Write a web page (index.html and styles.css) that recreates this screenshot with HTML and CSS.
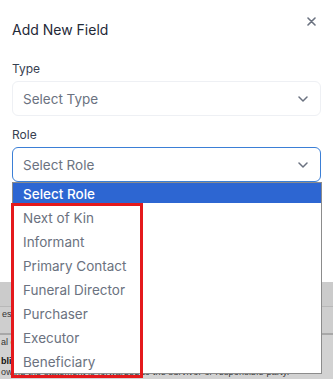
FILE: index.html
```html
<!DOCTYPE html>
<html>
<head>
    <title>Add New Field</title>
    <link rel="stylesheet" href="styles.css">
</head>
<body>

<div class="modal">
    <div class="modal-header">
        <h2 class="modal-title">Add New Field</h2>
        <span class="close">
            <svg width="9" height="9" viewBox="0 0 9 9"><path d="M1 1L8 8M8 1L1 8" stroke="#6b7280" stroke-width="1.6" stroke-linecap="round"/></svg>
        </span>
    </div>

    <div class="form-group">
        <label>Type</label>
        <div class="select">
            <span>Select Type</span>
            <svg class="chevron" width="10" height="6" viewBox="0 0 10 6"><path d="M1 1L5 5L9 1" fill="none" stroke="#6b7280" stroke-width="1.5" stroke-linecap="round" stroke-linejoin="round"/></svg>
        </div>
    </div>

    <div class="form-group">
        <label>Role</label>
        <div class="select active">
            <span>Select Role</span>
            <svg class="chevron" width="10" height="6" viewBox="0 0 10 6"><path d="M1 1L5 5L9 1" fill="none" stroke="#6b7280" stroke-width="1.5" stroke-linecap="round" stroke-linejoin="round"/></svg>
        </div>
    </div>
</div>

<!-- страница под модальным окном -->
<div class="page-behind">
    <div class="row row-head"></div>
    <div class="row row-mid"><span>est</span></div>
    <div class="row-text">
        <p>al e</p>
        <p class="bold">blic</p>
        <p class="last">owing the statement is forwarded to the survivor or responsible party.</p>
    </div>
</div>

<!-- открытый список -->
<ul class="dropdown">
    <li class="selected">Select Role</li>
    <li>Next of Kin</li>
    <li>Informant</li>
    <li>Primary Contact</li>
    <li>Funeral Director</li>
    <li>Purchaser</li>
    <li>Executor</li>
    <li>Beneficiary</li>
</ul>

<div class="highlight-box"></div>

</body>
</html>
```

FILE: styles.css
```css
body {
    font-family: Inter, "Noto Sans", sans-serif;
    margin: 0;
    padding: 0;
    width: 333px;
    height: 379px;
    overflow: hidden;
    background-color: #d2d2d2;
    position: relative;
}

.modal {
    background-color: #fff;
    height: 282px;
    box-sizing: border-box;
    padding: 12px 12px 0 12px;
}

.modal-header {
    display: flex;
    justify-content: space-between;
    align-items: flex-start;
}

.modal-title {
    margin: 8px 0 0 0;
    font-size: 14px;
    line-height: 20px;
    font-weight: 400;
    color: #1f2937;
}

.close {
    display: flex;
    margin: 5px 5px 0 0;
    cursor: pointer;
}

.form-group {
    margin-top: 21px;
}

.form-group + .form-group {
    margin-top: 11px;
}

.form-group label {
    display: block;
    font-size: 12px;
    line-height: 16px;
    color: #374151;
    margin-bottom: 4px;
}

.select {
    height: 35px;
    box-sizing: border-box;
    border: 1px solid #eef0f4;
    border-radius: 6px;
    display: flex;
    align-items: center;
    justify-content: space-between;
    padding: 0 12px 0 10px;
    font-size: 13.5px;
    color: #6b7280;
}

.select.active {
    border: 1.5px solid #3b7fd6;
}

/* Фон страницы */
.page-behind {
    font-family: "Liberation Sans", Arial, sans-serif;
    font-size: 9px;
    color: #333;
}

.row {
    border-bottom: 1px solid #b8b8b8;
    height: 24px;
    background-color: #cbcbcb;
    padding-left: 2px;
}

.row-mid {
    height: 28px;
    border-bottom: 2px solid #a8a8a8;
    background-color: #cecece;
    padding-top: 1px;
    box-sizing: border-box;
    line-height: 12px;
}

.row-text p {
    margin: 0;
    line-height: 11px;
    padding-left: 1px;
}

.row-text p:first-child {
    padding-top: 2px;
}

.row-text .bold {
    font-weight: bold;
    color: #111;
    padding-top: 8px;
}

.row-text .last {
    letter-spacing: 0.2px;
    white-space: nowrap;
}

/* Выпадающий список */
.dropdown {
    position: absolute;
    top: 182px;
    left: 12px;
    width: 310px;
    height: 192px;
    box-sizing: border-box;
    margin: 0;
    padding: 0;
    list-style-type: none;
    background-color: #fff;
    border: 1px solid #8c8c8c;
    font-size: 13.5px;
    color: #6b7280;
}

.dropdown li {
    height: 24px;
    line-height: 24px;
    padding-left: 10px;
}

.dropdown li.selected {
    height: 20px;
    line-height: 22px;
    margin-bottom: 3px;
    background-color: #2d66d2;
    color: #fff;
    font-weight: 500;
}

.highlight-box {
    position: absolute;
    left: 11px;
    top: 203px;
    width: 132px;
    height: 175px;
    box-sizing: border-box;
    border: 3px solid #e4191c;
}
```
